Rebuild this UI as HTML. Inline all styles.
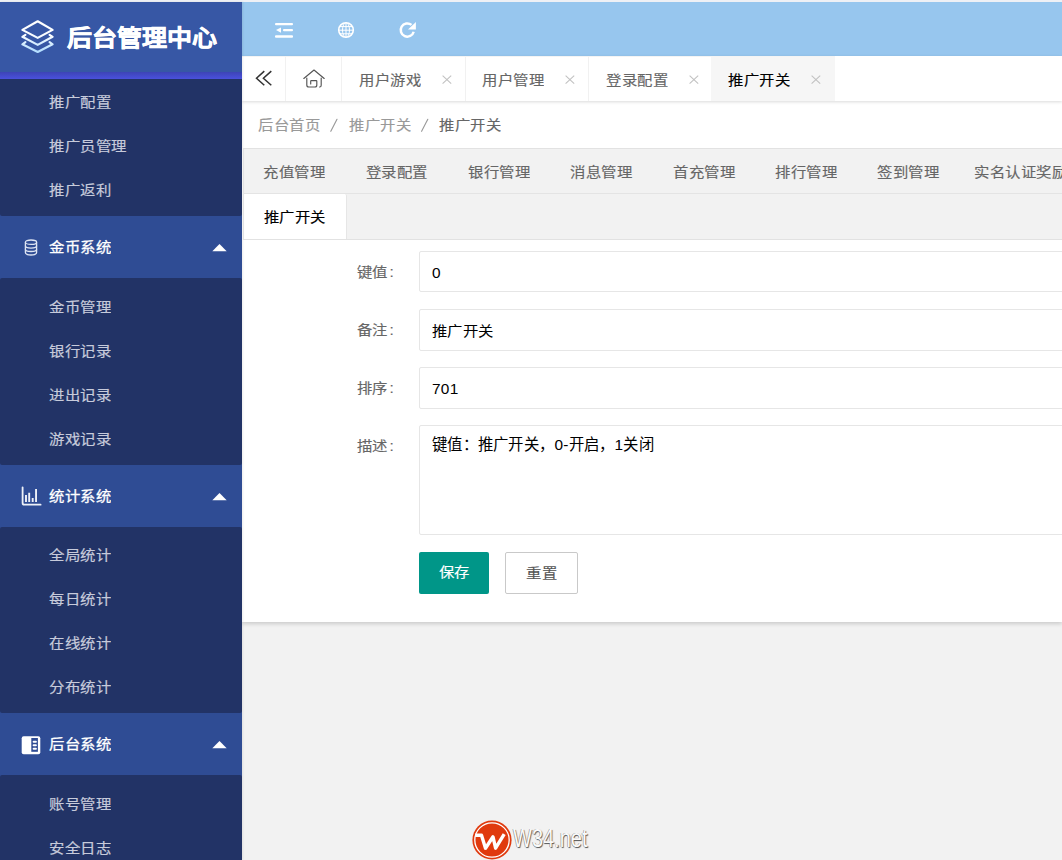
<!DOCTYPE html>
<html lang="zh-CN"><head><meta charset="utf-8"><title>后台管理中心</title>
<style>
*{margin:0;padding:0;box-sizing:border-box}
html,body{width:1062px;height:860px;overflow:hidden;background:#f2f2f2;font-family:"Liberation Sans",sans-serif;font-size:15.4px;color:#333}
.abs{position:absolute}
#topline{left:0;top:0;width:1062px;height:2px;background:#eef0f5}
#side{left:0;top:2px;width:242px;height:858px;background:#2f4c94;overflow:hidden;box-shadow:1px 0 2px rgba(0,0,0,.08);z-index:5}
#logo{left:0;top:0;width:242px;height:70px;background:#3757a5}
#logo .t{left:67px;top:15.6px;font-size:25px;font-weight:bold;color:#fff;-webkit-text-stroke:.6px #fff;transform:scaleY(.92);line-height:40px;white-space:nowrap}
#band{left:0;top:70px;width:242px;height:7px;background:linear-gradient(#3d44b6,#4a51dc)}
.sub{left:0;width:242px;background:#223366;border-radius:2px}
.it{position:absolute;left:49px;color:#c7cbdb;line-height:20px;white-space:nowrap;letter-spacing:.5px;transform:scaleY(.9);-webkit-text-stroke-width:.2px}
.grp{left:0;width:242px;height:62px;background:#2f4c94}
.grp .t{position:absolute;left:49px;top:21.3px;line-height:20px;color:#fff;white-space:nowrap;letter-spacing:.5px;-webkit-text-stroke-width:.3px;transform:scaleY(.9)}
.grp svg{position:absolute}
#topbar{left:242px;top:2px;width:820px;height:54px;background:#97c6ee}
#tabs{left:242px;top:56px;width:820px;height:45px;background:#fff;box-shadow:0 1px 3px rgba(0,0,0,.15);z-index:2}
.tab{position:absolute;top:0;height:45px;border-right:1px solid #f1f1f1;border-top:1px solid #f4f4f4}
.tab .t{position:absolute;top:12.7px;line-height:20px;color:#666;white-space:nowrap;letter-spacing:.5px;transform:scaleY(.9);-webkit-text-stroke-width:.15px}
.tab svg{position:absolute;top:17.6px}
#card{left:242px;top:101px;width:820px;height:521px;background:#fff;box-shadow:0 2px 4px rgba(0,0,0,.16)}
.cr{position:absolute;top:13.8px;line-height:20px;color:#999;white-space:nowrap;letter-spacing:.5px;transform:scaleY(.9);-webkit-text-stroke-width:.15px}
#tt{left:1px;top:47px;width:819px;height:92px;background:#f2f2f2;border-top:1px solid #e2e2e2;border-left:1px solid #e8e8e8;border-bottom:1px solid #e2e2e2}
.tl{position:absolute;top:13.3px;line-height:20px;color:#666;white-space:nowrap;letter-spacing:.5px;transform:scaleY(.9);-webkit-text-stroke-width:.15px}
.lbl{position:absolute;left:114.5px;line-height:20px;color:#666;white-space:nowrap;letter-spacing:.5px;transform:scaleY(.9);-webkit-text-stroke-width:.15px}
.inp{position:absolute;left:177px;width:660px;height:41px;border:1px solid #e6e6e6;border-radius:2px;background:#fff}
.inp .v{position:absolute;left:12px;top:11px;line-height:20px;color:#000;white-space:nowrap;letter-spacing:.3px}
.btn{position:absolute;top:451px;height:42px;line-height:42px;text-align:center;border-radius:2px;white-space:nowrap;letter-spacing:.5px}
.btn span{display:inline-block;transform:scaleY(.9);-webkit-text-stroke-width:.15px}
</style></head>
<body>
<div id="topline" class="abs"></div>
<div id="side" class="abs">
  <div id="logo" class="abs">
    <svg class="abs" style="left:18px;top:16px" width="40" height="40" viewBox="0 0 40 40">
      <defs><linearGradient id="lg" gradientUnits="userSpaceOnUse" x1="0" y1="3" x2="0" y2="35"><stop offset="0" stop-color="#fff"/><stop offset=".45" stop-color="#fafdff"/><stop offset="1" stop-color="#acdaff"/></linearGradient></defs>
      <g fill="none" stroke="url(#lg)" stroke-width="2.2" stroke-linejoin="round" stroke-linecap="round">
      <path d="M4.4 11.9 L19.7 3.3 L34.6 11.9 L19.7 19.9 Z"/>
      <path d="M7.4 16.8 L4.4 18.8 L19.7 26.9 L34.6 18.8 L31.6 16.8"/>
      <path d="M7.4 24.2 L4.4 26.3 L19.7 33.9 L34.6 26.3 L31.6 24.2"/>
      </g>
    </svg>
    <div class="t abs">后台管理中心</div>
  </div>
  <div id="band" class="abs"></div>
  <div class="sub abs" style="top:77px;height:137px;border-radius:0 0 2px 2px">
    <div class="it" style="top:13.3px">推广配置</div>
    <div class="it" style="top:57.3px">推广员管理</div>
    <div class="it" style="top:101.4px">推广返利</div>
  </div>
  <div class="grp abs" style="top:214px">
    <svg style="left:24px;top:23px" width="14" height="17" viewBox="0 0 14 17" fill="none" stroke="#dfe5f3" stroke-width="1.3">
      <ellipse cx="7" cy="3.2" rx="5.6" ry="2.2"/>
      <path d="M1.4 3.2 V13.6 C1.4 15 4 16 7 16 C10 16 12.6 15 12.6 13.6 V3.2"/>
      <path d="M1.4 6.8 C1.4 8.2 4 9.1 7 9.1 C10 9.1 12.6 8.2 12.6 6.8"/>
      <path d="M1.4 10.2 C1.4 11.6 4 12.5 7 12.5 C10 12.5 12.6 11.6 12.6 10.2"/>
    </svg>
    <div class="t">金币系统</div>
    <svg style="left:211.5px;top:27.6px" width="16" height="8" viewBox="0 0 16 8"><path d="M0.3 7.2 L7.5 0 L14.7 7.2 Z" fill="#fff"/></svg>
  </div>
  <div class="sub abs" style="top:276px;height:187px">
    <div class="it" style="top:18.8px">金币管理</div>
    <div class="it" style="top:62.7px">银行记录</div>
    <div class="it" style="top:106.7px">进出记录</div>
    <div class="it" style="top:150.7px">游戏记录</div>
  </div>
  <div class="grp abs" style="top:463px">
    <svg style="left:21px;top:20px" width="22" height="22" viewBox="0 0 22 22" fill="none" stroke="#eef1f8">
      <path d="M1.6 2.3 V18 Q1.6 19.7 3.3 19.7 H19.6" stroke-width="1.8" stroke-linecap="round"/>
      <path d="M5 9.9 V16.9 M8.2 7.7 V16.9 M11.7 13.1 V16.9 M15.05 4 V16.9" stroke-width="1.9"/>
    </svg>
    <div class="t">统计系统</div>
    <svg style="left:211.5px;top:27.6px" width="16" height="8" viewBox="0 0 16 8"><path d="M0.3 7.2 L7.5 0 L14.7 7.2 Z" fill="#fff"/></svg>
  </div>
  <div class="sub abs" style="top:525px;height:186px">
    <div class="it" style="top:17.9px">全局统计</div>
    <div class="it" style="top:61.8px">每日统计</div>
    <div class="it" style="top:105.8px">在线统计</div>
    <div class="it" style="top:149.8px">分布统计</div>
  </div>
  <div class="grp abs" style="top:711px">
    <svg style="left:21px;top:23px" width="20" height="19" viewBox="0 0 20 19">
      <rect x="0.7" y="0.3" width="18.6" height="18" rx="2" fill="#fff"/>
      <rect x="10.3" y="2" width="6.6" height="13.8" fill="#2f4c94"/>
      <rect x="11.6" y="4.7" width="4.3" height="2" rx="1" fill="#fff"/>
      <rect x="11.6" y="8.2" width="4.3" height="2" rx="1" fill="#fff"/>
      <rect x="11.6" y="11.75" width="4.3" height="2" rx="1" fill="#fff"/>
    </svg>
    <div class="t">后台系统</div>
    <svg style="left:211.5px;top:27.6px" width="16" height="8" viewBox="0 0 16 8"><path d="M0.3 7.2 L7.5 0 L14.7 7.2 Z" fill="#fff"/></svg>
  </div>
  <div class="sub abs" style="top:773px;height:100px">
    <div class="it" style="top:18.8px">账号管理</div>
    <div class="it" style="top:62.7px">安全日志</div>
  </div>
</div>

<div id="topbar" class="abs">
  <svg class="abs" style="left:33px;top:21px" width="20" height="17" viewBox="0 0 20 17" fill="#fff">
    <rect x="0" y="0" width="18" height="2.3" rx="1"/>
    <rect x="8" y="6" width="10" height="2.2" rx="1"/>
    <path d="M1 7.1 L6 4.4 V9.8 Z"/>
    <rect x="0" y="12.2" width="18" height="2.5" rx="1"/>
  </svg>
  <svg class="abs" style="left:94px;top:18px" width="20" height="20" viewBox="0 0 20 20" fill="none" stroke="#fff">
    <circle cx="10" cy="10" r="7.3" stroke-width="1.6"/>
    <ellipse cx="10" cy="10" rx="3.5" ry="7.3" stroke-width="1"/>
    <path d="M10 2.7 V17.3 M2.7 10.2 H17.3" stroke-width="1"/>
    <path d="M3.6 6.6 H16.4 M3.6 13.8 H16.4" stroke-width="1"/>
  </svg>
  <svg class="abs" style="left:155px;top:16px" width="22" height="22" viewBox="0 0 22 22">
    <path d="M16.7 13.7 A6.6 6.6 0 1 1 14.5 6.9" fill="none" stroke="#fff" stroke-width="2.5"/>
    <path d="M18.9 4 V11.6 H11 Z" fill="#fff"/>
  </svg>
</div>

<div id="tabs" class="abs">
  <div class="tab" style="left:0;width:44px">
    <svg style="left:13px;top:13px" width="18" height="17" viewBox="0 0 18 17" fill="none" stroke="#333" stroke-width="1.5">
      <path d="M9.3 1.1 L1.5 8.2 L9.3 15.2 M16.3 1.1 L8.4 8.2 L16.3 15.2"/>
    </svg>
  </div>
  <div class="tab" style="left:44px;width:56px">
    <svg style="left:17px;top:12px" width="22" height="19" viewBox="0 0 22 19" fill="none" stroke="#555" stroke-width="1.15" stroke-linecap="round" stroke-linejoin="round">
      <path d="M0.8 9.5 L11 1 L21.2 9.5"/>
      <path d="M3.8 9 V16 Q3.8 18 5.8 18 H12 Q13.8 18 13.8 16 V12.2 Q13.8 11.6 13.2 11.6 H8.3 Q7.7 11.6 7.7 12.2 V15"/>
      <path d="M18.2 9 V16.2 Q18.2 18 16.6 18"/>
    </svg>
  </div>
  <div class="tab" style="left:100px;width:124px"><div class="t" style="left:17px">用户游戏</div>
    <svg style="left:100px" width="10" height="10" viewBox="0 0 10 10" stroke="#c2c2c2" stroke-width="1.1"><path d="M0.6 0.6 L9.2 8.6 M9.2 0.6 L0.6 8.6"/></svg></div>
  <div class="tab" style="left:223px;width:124px"><div class="t" style="left:17px">用户管理</div>
    <svg style="left:100px" width="10" height="10" viewBox="0 0 10 10" stroke="#c2c2c2" stroke-width="1.1"><path d="M0.6 0.6 L9.2 8.6 M9.2 0.6 L0.6 8.6"/></svg></div>
  <div class="tab" style="left:347px;width:124px"><div class="t" style="left:17px">登录配置</div>
    <svg style="left:100px" width="10" height="10" viewBox="0 0 10 10" stroke="#c2c2c2" stroke-width="1.1"><path d="M0.6 0.6 L9.2 8.6 M9.2 0.6 L0.6 8.6"/></svg></div>
  <div class="tab" style="left:469px;width:124px;background:#f6f6f6;border-right:0"><div class="t" style="left:17px;color:#000">推广开关</div>
    <svg style="left:100px" width="10" height="10" viewBox="0 0 10 10" stroke="#c2c2c2" stroke-width="1.1"><path d="M0.6 0.6 L9.2 8.6 M9.2 0.6 L0.6 8.6"/></svg></div>
</div>

<div id="card" class="abs">
  <div class="cr" style="left:16px">后台首页</div>
  <svg class="abs" style="left:86px;top:16px" width="12" height="18" viewBox="0 0 12 18"><path d="M2.8 14.3 L9 2.3" stroke="#9a9a9a" stroke-width="1.15" stroke-linecap="round"/></svg>
  <div class="cr" style="left:107px">推广开关</div>
  <svg class="abs" style="left:177px;top:16px" width="12" height="18" viewBox="0 0 12 18"><path d="M2.6 14.3 L8.8 2.3" stroke="#9a9a9a" stroke-width="1.15" stroke-linecap="round"/></svg>
  <div class="cr" style="left:197px;color:#666">推广开关</div>
  <div id="tt" class="abs">
    <div class="tl" style="left:19px">充值管理</div>
    <div class="tl" style="left:121.7px">登录配置</div>
    <div class="tl" style="left:224px">银行管理</div>
    <div class="tl" style="left:326.2px">消息管理</div>
    <div class="tl" style="left:429.4px">首充管理</div>
    <div class="tl" style="left:531px">排行管理</div>
    <div class="tl" style="left:633.4px">签到管理</div>
    <div class="tl" style="left:730px">实名认证奖励</div>
    <div class="abs" style="left:0;top:44px;width:819px;height:1px;background:#e4e4e4"></div>
    <div class="abs" style="left:0;top:45px;width:103px;height:45px;background:#fff;border-right:1px solid #e6e6e6;border-radius:0 2px 0 0"></div>
    <div class="tl" style="left:19.8px;top:58.2px;color:#000">推广开关</div>
  </div>
  <div class="lbl" style="top:160.6px">键值<span style="margin-left:2px">:</span></div>
  <div class="inp" style="top:150px"><div class="v">0</div></div>
  <div class="lbl" style="top:218.8px">备注<span style="margin-left:2px">:</span></div>
  <div class="inp" style="top:208px;height:42px"><div class="v" style="transform:scaleY(.9)">推广开关</div></div>
  <div class="lbl" style="top:277px">排序<span style="margin-left:2px">:</span></div>
  <div class="inp" style="top:266px;height:42px"><div class="v">701</div></div>
  <div class="lbl" style="top:335.2px">描述<span style="margin-left:2px">:</span></div>
  <div class="inp" style="top:324px;height:110px"><div class="v" style="top:9px">键值：推广开关，0-开启，1关闭</div></div>
  <div class="btn" style="left:177px;width:70px;background:#009688;color:#fff"><span>保存</span></div>
  <div class="btn" style="left:263px;width:73px;background:#fff;color:#555;border:1px solid #c9c9c9"><span>重置</span></div>
</div>
<div id="wm" class="abs" style="left:471px;top:819px;width:130px;height:41px">
  <svg class="abs" style="left:0;top:0" width="42" height="42" viewBox="0 0 42 42">
    <circle cx="21" cy="21" r="19.6" fill="#e03a0e"/>
    <circle cx="21" cy="21" r="17.2" fill="none" stroke="#fff" stroke-width="1.3"/>
    <path d="M4.2 16.3 H10.5 L14.5 29.2 L22 17.8 L24.6 29.2 L33.2 15.2" fill="none" stroke="#fff" stroke-width="3.4" stroke-linejoin="round"/>
  </svg>
  <div class="abs" style="left:42px;top:6px;font-size:25px;line-height:26px;color:#fafafa;white-space:nowrap;transform:scaleX(.8);transform-origin:0 0;text-shadow:1px 1px 1px #555,-0.6px 0 0 #8a8a8a">W34.net</div>
</div>
</body></html>
